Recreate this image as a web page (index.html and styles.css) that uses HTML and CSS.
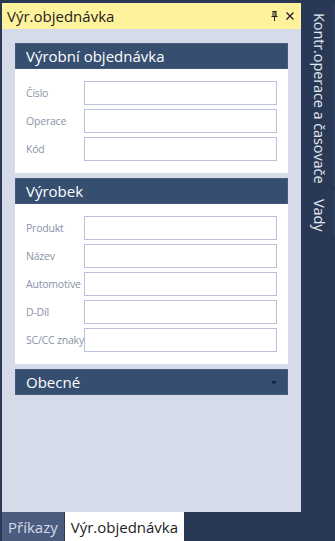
FILE: index.html
```html
<!DOCTYPE html>
<html>
<head>
  <meta charset="utf-8">
  <title>Výr.objednávka</title>
  <link rel="stylesheet" href="styles.css">
</head>
<body>
  <div class="dock">
    <div class="pane">
      <div class="pane-title">
        <span class="pane-name">Výr.objednávka</span>
        <span class="pane-buttons">
          <svg class="pin" width="7" height="10" viewBox="0 0 7 10">
            <path d="M1.5 0.5h4M2 0.5v5M5 0.5v5M4 0.5v5M0.5 5.5h6M3.5 5.5v4.5" stroke="#1e1e1e" stroke-width="1" fill="none"/>
          </svg>
          <svg class="close" width="8" height="8" viewBox="0 0 8 8">
            <path d="M0.5 0.5l7 7M7.5 0.5l-7 7" stroke="#1e1e1e" stroke-width="1.3" fill="none"/>
          </svg>
        </span>
      </div>

      <div class="pane-body">
        <div class="group">
          <div class="group-head">Výrobní objednávka</div>
          <div class="group-body">
            <div class="row"><label>Číslo</label><input type="text"></div>
            <div class="row"><label>Operace</label><input type="text"></div>
            <div class="row"><label>Kód</label><input type="text"></div>
          </div>
        </div>

        <div class="group">
          <div class="group-head">Výrobek</div>
          <div class="group-body">
            <div class="row"><label>Produkt</label><input type="text"></div>
            <div class="row"><label>Název</label><input type="text"></div>
            <div class="row"><label>Automotive</label><input type="text"></div>
            <div class="row"><label>D-Díl</label><input type="text"></div>
            <div class="row"><label>SC/CC znaky</label><input type="text"></div>
          </div>
        </div>

        <div class="group">
          <div class="group-head collapsed">Obecné <span class="caret"></span></div>
        </div>
      </div>

      <div class="bottom-tabs">
        <div class="btab">Příkazy</div>
        <div class="btab active">Výr.objednávka</div>
      </div>
    </div>

    <div class="side-tabs">
      <div class="stab stab-long">Kontr.operace a časovače</div>
      <div class="stab">Vady</div>
    </div>
  </div>
</body>
</html>
```

FILE: styles.css
```css
html, body {
  height: 100%;
}

body {
  margin: 0;
  padding: 0;
  background-color: #293955;
  font-family: "Open Sans", "Noto Sans", sans-serif;
  overflow: hidden;
}

.dock {
  display: flex;
  height: 541px;
}

.pane {
  display: flex;
  flex-direction: column;
  width: 299px;
  margin-left: 2px;
  padding-top: 3px;
}

.pane-title {
  display: flex;
  align-items: center;
  justify-content: space-between;
  height: 26px;
  padding: 0 7px 0 5px;
  background-color: #fff29d;
  color: #1e1e1e;
  font-size: 15px;
}

.pane-buttons {
  display: flex;
  align-items: center;
  gap: 8px;
}

.pane-body {
  flex: 1;
  display: flex;
  flex-direction: column;
  gap: 5px;
  padding: 14px 13px 0 13px;
  background-color: #d6dbe9;
}

.group-head {
  display: flex;
  align-items: center;
  justify-content: space-between;
  height: 24px;
  padding: 0 10px;
  background-color: #364e6f;
  border: 1px solid #465a7a;
  color: #ffffff;
  font-size: 15px;
}

.caret {
  width: 0;
  height: 0;
  border-left: 3.5px solid transparent;
  border-right: 3.5px solid transparent;
  border-top: 4px solid #1b2840;
  margin-top: 2px;
}

.group-body {
  display: flex;
  flex-direction: column;
  gap: 4px;
  padding: 12px 11px;
  background-color: #ffffff;
}

.row {
  display: flex;
  align-items: center;
}

.row label {
  width: 58px;
  flex: none;
  color: #8a93a8;
  font-size: 10.5px;
  letter-spacing: -0.2px;
  white-space: nowrap;
}

.row input {
  flex: 1;
  min-width: 0;
  height: 24px;
  box-sizing: border-box;
  margin: 0;
  border: 1px solid #b9c2da;
  background: #ffffff;
  outline: none;
}

.bottom-tabs {
  display: flex;
  height: 29px;
}

.btab {
  display: flex;
  align-items: center;
  padding: 0 6px;
  font-size: 15px;
  background-color: #4b5c7f;
  color: #d6dbe9;
}

.btab.active {
  background-color: #ffffff;
  color: #1e1e1e;
  margin-left: 1px;
}

.side-tabs {
  flex: 1;
  display: flex;
  flex-direction: column;
  align-items: flex-end;
  padding-top: 5px;
  gap: 4px;
}

.stab {
  writing-mode: vertical-rl;
  width: 30px;
  box-sizing: border-box;
  padding: 8px 0 4px 0;
  border-right: 2px solid #30415f;
  color: #e4e8f2;
  font-size: 14.5px;
  letter-spacing: -0.1px;
  line-height: 27px;
}
```
